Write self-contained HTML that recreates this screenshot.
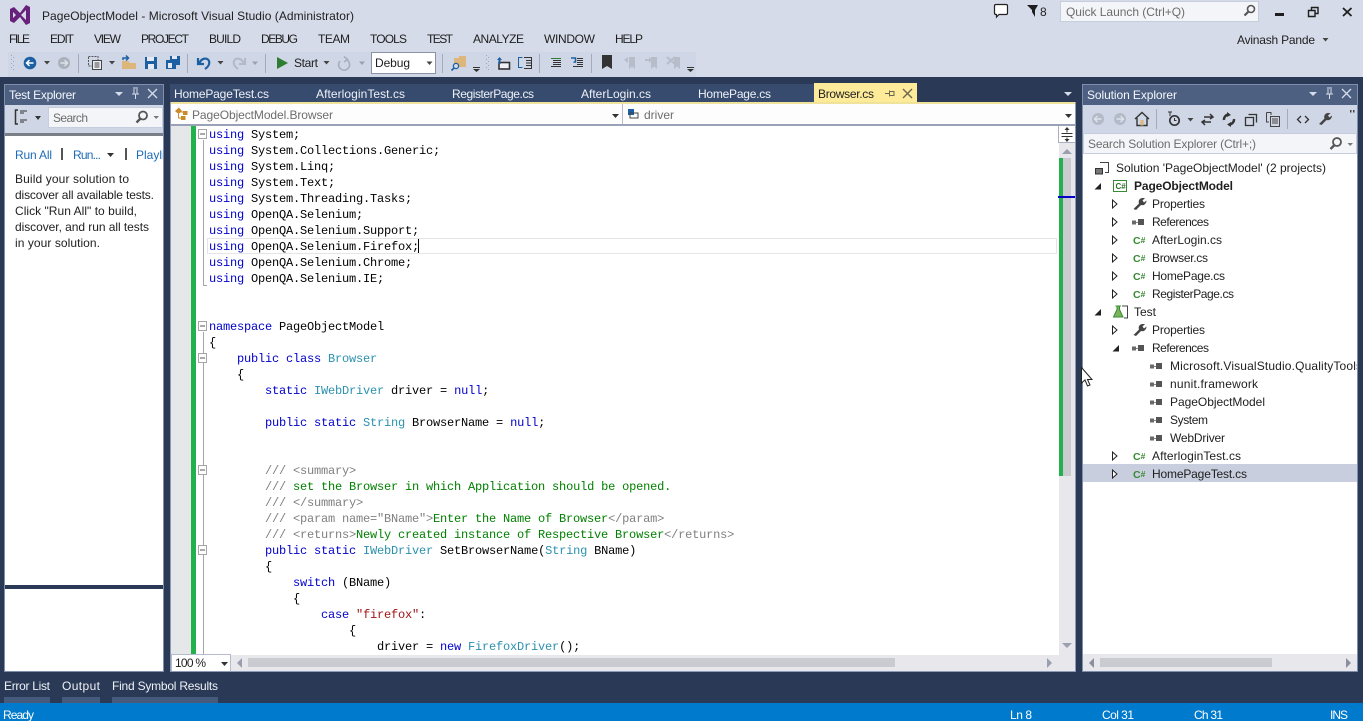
<!DOCTYPE html>
<html><head><meta charset="utf-8"><title>Visual Studio</title>
<style>
html,body{margin:0;padding:0;width:1363px;height:721px;overflow:hidden;background:#d6dbe9}
svg{display:block}
text{font-family:"Liberation Sans",sans-serif;font-size:12px;fill:#1e1e1e;white-space:pre}
.m text,text.m{font-family:"Liberation Mono",monospace;font-size:12px;letter-spacing:-.2px;fill:#000}
.k{fill:#0000cc}.t{fill:#2b91af}.s{fill:#a31515}.c{fill:#008000}.g{fill:#808080}
.tab text{fill:#eef1f7}
.cs{font-size:10.5px;font-weight:bold;fill:#388a34}
.cs tspan{font-size:8.5px}
</style></head><body>
<svg xmlns="http://www.w3.org/2000/svg" width="1363" height="721" viewBox="0 0 1363 721">
<defs>
<clipPath id="seclip"><rect x="1083" y="158" width="274" height="496"/></clipPath>
<clipPath id="teclip"><rect x="5" y="140" width="158" height="40"/></clipPath>
<g id="refi"><rect x="0" y="1.5" width="4" height="4" fill="#6a6a6a"/><rect x="4" y="3" width="2" height="1" fill="#888"/><rect x="6" y="0" width="6" height="6" fill="#555"/></g>
<path id="tri" d="M0.5 1L5 5L0.5 9Z" fill="#fff" stroke="#222" stroke-width="1"/>
<path id="open" d="M6.5 0V6.5H0Z" fill="#222"/>
<g id="wrench"><path d="M0.5 12L6 6.5C5 4 6.5 1 9.5 1L12 1L9.5 3.5L11 5.5L13.5 3.5C13.5 6.5 11 9 8 8L3 13Z" fill="#444"/></g>
<path id="dd" d="M0.5 0H6.5L3.5 3.5Z" fill="#444"/>
</defs>

<!-- frame -->
<rect width="1363" height="721" fill="#d6dbe9"/>
<rect x="0" y="77" width="1363" height="626" fill="#2a3a56"/>
<rect x="0" y="703" width="1363" height="18" fill="#007acc"/>

<!-- VS logo -->
<path d="M10 9L14 7L20 13L26 5L30 7V23L26 25L20 17L14 23L10 21ZM13 12V18L16 15ZM26 10L21 15L26 20Z" fill="#68217a" fill-rule="evenodd"/>
<text x="42" y="20" textLength="312">PageObjectModel - Microsoft Visual Studio (Administrator)</text>

<!-- menu -->
<g>
<text x="9" y="43" textLength="21">FILE</text>
<text x="50" y="43" textLength="24">EDIT</text>
<text x="94" y="43" textLength="27">VIEW</text>
<text x="141" y="43" textLength="48">PROJECT</text>
<text x="209" y="43" textLength="32">BUILD</text>
<text x="261" y="43" textLength="37">DEBUG</text>
<text x="318" y="43" textLength="32">TEAM</text>
<text x="370" y="43" textLength="37">TOOLS</text>
<text x="427" y="43" textLength="26">TEST</text>
<text x="473" y="43" textLength="51">ANALYZE</text>
<text x="544" y="43" textLength="51">WINDOW</text>
<text x="615" y="43" textLength="28">HELP</text>
</g>

<!-- top right -->
<path d="M996 4.5H1006Q1007.5 4.5 1007.5 6V13Q1007.5 14.5 1006 14.5H999L996.5 17V14.5H996Q994.5 14.5 994.5 13V6Q994.5 4.5 996 4.5Z" fill="#fff" stroke="#222" stroke-width="1.2"/>
<path d="M1027 5H1038L1035 10V17L1032 12V10Z" fill="#1e1e1e"/>
<text x="1040" y="16" textLength="7">8</text>
<rect x="1060.5" y="1.5" width="198" height="20" fill="#f4f5f9" stroke="#c6cede"/>
<text x="1066" y="16" textLength="119" style="fill:#6d6d6d">Quick Launch (Ctrl+Q)</text>
<circle cx="1251" cy="9" r="3.5" fill="none" stroke="#555" stroke-width="1.6"/><path d="M1248.5 11.5L1244.5 15.5" stroke="#555" stroke-width="2.2"/>
<rect x="1275" y="13" width="9" height="3" fill="#1e1e1e"/>
<path d="M1311.5 10V7.5H1318V13.5H1315.5M1308.5 10.5H1315V16.5H1308.5Z" fill="none" stroke="#1e1e1e" stroke-width="1.4"/>
<path d="M1343 8L1351.5 16M1351.5 8L1343 16" stroke="#1e1e1e" stroke-width="1.8"/>
<text x="1237" y="44" textLength="78">Avinash Pande</text>
<use href="#dd" x="1322" y="38"/>

<!-- toolbar -->
<rect x="8" y="52" width="688" height="25" fill="#cfd6e5"/>
<g fill="#a0a6b4"><rect x="11" y="55" width="1" height="1"/><rect x="13" y="57" width="1" height="1"/><rect x="11" y="59" width="1" height="1"/><rect x="13" y="61" width="1" height="1"/><rect x="11" y="63" width="1" height="1"/><rect x="13" y="65" width="1" height="1"/><rect x="11" y="67" width="1" height="1"/><rect x="13" y="69" width="1" height="1"/></g>
<circle cx="30" cy="63" r="6.3" fill="#1c5fa3"/><path d="M33.5 63H27M29.5 60L26.5 63L29.5 66" stroke="#fff" stroke-width="1.5" fill="none"/>
<use href="#dd" x="43.5" y="61"/>
<circle cx="64" cy="63" r="6" fill="#aab0bc"/><path d="M60.5 63H67M64.5 60L67.5 63L64.5 66" stroke="#dfe3ec" stroke-width="1.4" fill="none"/>
<rect x="78" y="54" width="1" height="19" fill="#a5abba"/>
<path d="M88.5 56.5H98V60" stroke="#555" stroke-dasharray="2 1" fill="none"/>
<path d="M88.5 57V66H92" stroke="#555" stroke-dasharray="2 1" fill="none"/>
<rect x="92.5" y="60.5" width="9" height="9" fill="#eef0f5" stroke="#444"/>
<path d="M94.5 63H99.5M94.5 65H99.5M94.5 67H99.5" stroke="#444"/>
<use href="#dd" x="108.5" y="61"/>
<path d="M122 61H128L130 63H136V69H122Z" fill="#dcb67a"/><path d="M123 60V58H128M126 55.5L128.5 58L126 60.5" stroke="#1c5fa3" stroke-width="1.5" fill="none"/>
<path d="M145 57H157V69H145Z" fill="#1c5fa3"/><rect x="147" y="57" width="7" height="4" fill="#e6e9f2"/><rect x="148" y="64" width="6" height="5" fill="#e6e9f2"/>
<path d="M170 56H180V65H176V69H166V60H170Z" fill="#1c5fa3"/><rect x="172" y="56" width="5" height="3" fill="#e6e9f2"/><rect x="168" y="63" width="4" height="5" fill="#e6e9f2"/>
<rect x="187" y="54" width="1" height="19" fill="#a5abba"/>
<path d="M198 58V64H204M199 64C201 58 207 57 209 61C210 64 208 67 205 69" fill="none" stroke="#1c5fa3" stroke-width="2.2"/>
<use href="#dd" x="217" y="61"/>
<path d="M245 58V64H239M244 64C242 58 236 57 234 61C233 64 235 67 238 69" fill="none" stroke="#b4b9c5" stroke-width="2"/>
<path d="M252 61.5H258L255 65Z" fill="#9aa0ad"/>
<rect x="265" y="54" width="1" height="19" fill="#a5abba"/>
<path d="M277 57L288 63L277 69Z" fill="#2f7d32"/>
<text x="294" y="67" textLength="24">Start</text>
<use href="#dd" x="323" y="61"/>
<path d="M340 61A5.5 5.5 0 1 0 347 60M344 56.5L347.5 59.5L344 62" fill="none" stroke="#a8aeba" stroke-width="1.6"/>
<path d="M359 61.5H365L362 65Z" fill="#9aa0ad"/>
<rect x="371.5" y="52.5" width="64" height="21" fill="#fff" stroke="#8b92a5"/>
<text x="375" y="67" textLength="35">Debug</text>
<use href="#dd" x="426" y="61.5"/>
<rect x="442" y="54" width="1" height="19" fill="#a5abba"/>
<path d="M454 58H459V56H466V67H458L454 64Z" fill="#dcb67a"/><circle cx="456" cy="66" r="2.6" fill="#d6dbe9" stroke="#1c5fa3" stroke-width="1.3"/><path d="M454 68L451.5 70.5" stroke="#1c5fa3" stroke-width="1.6"/>
<rect x="473" y="67" width="7" height="1" fill="#333"/><path d="M473 69H480L476.5 72Z" fill="#333"/>
<g fill="#a0a6b4"><rect x="486" y="55" width="1" height="1"/><rect x="488" y="57" width="1" height="1"/><rect x="486" y="59" width="1" height="1"/><rect x="488" y="61" width="1" height="1"/><rect x="486" y="63" width="1" height="1"/><rect x="488" y="65" width="1" height="1"/><rect x="486" y="67" width="1" height="1"/><rect x="488" y="69" width="1" height="1"/></g>
<rect x="499" y="62.5" width="10.5" height="6.5" fill="#eef0f5" stroke="#333" stroke-width="1.6"/><path d="M497 60L499.5 57L502 60H500.5V64H498.5V60Z" fill="#1c5fa3"/>
<path d="M522.5 57.5H518.5V67.5H522.5" stroke="#1c5fa3" fill="none"/><path d="M524 57.5H532M526 60.5H532M526 63H532M526 65.5H532M524 68.5H532M531.5 57V69" stroke="#333" fill="none"/>
<rect x="539" y="54" width="1" height="19" fill="#a5abba"/>
<path d="M551 58.5H561" stroke="#2f7d32"/><path d="M553 60.5H561M553 62.5H561M553 64.5H561M551 66.5H561" stroke="#333"/>
<path d="M571 58H575.5V62H573.5" stroke="#1c5fa3" stroke-width="1.5" fill="none"/><path d="M577 58.5H583M577 60.5H583M577 62.5H583M577 64.5H583M573 66.5H583" stroke="#333"/>
<rect x="591" y="54" width="1" height="19" fill="#a5abba"/>
<path d="M602 55H612V69L607 66L602 69Z" fill="#333"/>
<path d="M629 57H635V69L632 66.5L629 69Z" fill="#b7bdc9"/><path d="M628 57L624 60L628 63Z" fill="#b7bdc9"/>
<path d="M651 57H657V69L654 66.5L651 69Z" fill="#b7bdc9"/><path d="M645 59H649V57L652 60L649 63V61H645Z" fill="#b7bdc9"/>
<path d="M674 57H680V69L677 66.5L674 69Z" fill="#b7bdc9"/><path d="M667 57L675 64M675 57L667 64" stroke="#b7bdc9" stroke-width="2"/>
<rect x="687" y="67" width="7" height="1" fill="#333"/><path d="M687 69H694L690.5 72Z" fill="#333"/>

<!-- Test Explorer -->
<rect x="4.5" y="84.5" width="159" height="587" fill="#fff" stroke="#7f8eab"/>
<rect x="5" y="85" width="158" height="20" fill="#4d6082"/>
<text x="9" y="99" textLength="67" style="fill:#f5f7fb">Test Explorer</text>
<path d="M115 92H123L119 96Z" fill="#d5dcea"/>
<path d="M133 88H138M134 89V94H137V89M132 94H139M135.5 94V99" stroke="#d5dcea" fill="none"/>
<path d="M148 89L157 98M157 89L148 98" stroke="#d5dcea" stroke-width="1.3"/>
<rect x="5" y="105" width="158" height="26" fill="#cfd6e5"/>
<rect x="5" y="133" width="158" height="3" fill="#7b7f87"/>
<rect x="5" y="131" width="158" height="2" fill="#cfd6e5"/>
<path d="M15.5 109.5V124.5M15 110H18M15 124H18" stroke="#333" stroke-width="1.5" fill="none"/><path d="M20 111H27M20 113H24M20 120H27M20 122H24" stroke="#333"/>
<path d="M35 116H41L38 120Z" fill="#333"/>
<rect x="48.5" y="107.5" width="114" height="20" fill="#f4f5f9" stroke="#c6cede"/>
<text x="53" y="122" textLength="35" style="fill:#6d6d6d">Search</text>
<circle cx="143" cy="115.5" r="4" fill="none" stroke="#555" stroke-width="1.8"/><path d="M140.5 118.5L136.5 122.5" stroke="#555" stroke-width="2.4"/>
<path d="M153.5 116H159L156.2 119Z" fill="#777"/>
<text x="15" y="159" textLength="37" style="fill:#1e6bb8">Run All</text>
<rect x="61" y="148" width="2" height="12" fill="#555"/>
<text x="73" y="159" textLength="28" style="fill:#1e6bb8">Run...</text>
<path d="M107 153H114L110.5 157Z" fill="#333"/>
<rect x="125" y="148" width="2" height="12" fill="#555"/>
<g clip-path="url(#teclip)"><text x="136" y="159" textLength="38" style="fill:#1e6bb8">Playlist</text></g>
<text x="15" y="183" textLength="114">Build your solution to</text>
<text x="15" y="199" textLength="139">discover all available tests.</text>
<text x="15" y="215" textLength="122">Click "Run All" to build,</text>
<text x="15" y="231" textLength="134">discover, and run all tests</text>
<text x="15" y="247" textLength="85">in your solution.</text>
<rect x="5" y="585" width="158" height="4" fill="#2a3a56"/>

<!-- Editor -->
<rect x="170" y="84" width="645" height="18" fill="#364b6e"/>
<g class="tab">
<text x="174" y="98" textLength="95">HomePageTest.cs</text>
<text x="316" y="98" textLength="89">AfterloginTest.cs</text>
<text x="452" y="98" textLength="82">RegisterPage.cs</text>
<text x="581" y="98" textLength="70">AfterLogin.cs</text>
<text x="698" y="98" textLength="73">HomePage.cs</text>
</g>
<rect x="814" y="83" width="103" height="19" fill="#fdeb9a"/>
<text x="818" y="98" textLength="56">Browser.cs</text>
<path d="M885 93.5H889M889.5 90.5V96.5M890 91.5H894V95.5H890" stroke="#6b6650" fill="none"/>
<path d="M903 89L912 98M912 89L903 98" stroke="#6b6650" stroke-width="1.4"/>
<path d="M1064 92H1072L1068 96Z" fill="#d5dcea"/>
<rect x="170" y="102" width="906" height="570" fill="#fff"/>
<rect x="170" y="102" width="906" height="2" fill="#efe29a"/>
<rect x="171" y="104" width="904" height="20" fill="#fdfdfe"/>
<rect x="170" y="124" width="906" height="2" fill="#9aa2b8"/>
<rect x="622" y="104" width="1" height="20" fill="#b6bccb"/>
<path d="M175 111L179 107.5L182 111L178.5 114Z" fill="#c98a2b"/><rect x="183" y="111" width="4.5" height="4" fill="#c98a2b"/><rect x="181" y="116" width="4.5" height="4" fill="#c98a2b"/><path d="M178.5 114V118H181M180 112H183" stroke="#c98a2b" fill="none"/>
<text x="192" y="119" textLength="141" style="fill:#6d6d6d">PageObjectModel.Browser</text>
<path d="M612 114H619L615.5 118Z" fill="#333"/>
<rect x="628" y="109" width="6" height="6" fill="#1c5fa3"/><rect x="630" y="113" width="8" height="5" fill="none" stroke="#444"/>
<text x="644" y="119" textLength="30" style="fill:#6d6d6d">driver</text>
<path d="M1065 114H1072L1068.5 118Z" fill="#333"/>

<rect x="171" y="126" width="20" height="529" fill="#e6e7e8"/>
<rect x="191" y="126" width="5" height="529" fill="#22b14c"/>
<rect x="207.5" y="238.5" width="849" height="15" fill="none" stroke="#e5e5e5"/>
<rect x="418" y="239" width="1" height="14" fill="#000"/>
<path d="M203.5 140V285.5H207M203.5 332V655" stroke="#a5a5a5" fill="none"/>
<g fill="#fff" stroke="#a5a5a5">
<rect x="198.5" y="129.5" width="8" height="9"/><rect x="198.5" y="321.5" width="8" height="9"/><rect x="198.5" y="353.5" width="8" height="9"/><rect x="198.5" y="465.5" width="8" height="9"/><rect x="198.5" y="545.5" width="8" height="9"/>
</g>
<path d="M200 134H205M200 326H205M200 358H205M200 470H205M200 550H205" stroke="#555"/>

<g class="m">
<text x="209" y="138"><tspan class="k">using</tspan> System;</text>
<text x="209" y="154"><tspan class="k">using</tspan> System.Collections.Generic;</text>
<text x="209" y="170"><tspan class="k">using</tspan> System.Linq;</text>
<text x="209" y="186"><tspan class="k">using</tspan> System.Text;</text>
<text x="209" y="202"><tspan class="k">using</tspan> System.Threading.Tasks;</text>
<text x="209" y="218"><tspan class="k">using</tspan> OpenQA.Selenium;</text>
<text x="209" y="234"><tspan class="k">using</tspan> OpenQA.Selenium.Support;</text>
<text x="209" y="250"><tspan class="k">using</tspan> OpenQA.Selenium.Firefox;</text>
<text x="209" y="266"><tspan class="k">using</tspan> OpenQA.Selenium.Chrome;</text>
<text x="209" y="282"><tspan class="k">using</tspan> OpenQA.Selenium.IE;</text>
<text x="209" y="330"><tspan class="k">namespace</tspan> PageObjectModel</text>
<text x="209" y="346">{</text>
<text x="237" y="362"><tspan class="k">public class</tspan> <tspan class="t">Browser</tspan></text>
<text x="237" y="378">{</text>
<text x="265" y="394"><tspan class="k">static</tspan> <tspan class="t">IWebDriver</tspan> driver = <tspan class="k">null</tspan>;</text>
<text x="265" y="426"><tspan class="k">public static</tspan> <tspan class="t">String</tspan> BrowserName = <tspan class="k">null</tspan>;</text>
<text x="265" y="474"><tspan class="g">/// &lt;summary&gt;</tspan></text>
<text x="265" y="490"><tspan class="g">///</tspan><tspan class="c"> set the Browser in which Application should be opened.</tspan></text>
<text x="265" y="506"><tspan class="g">/// &lt;/summary&gt;</tspan></text>
<text x="265" y="522"><tspan class="g">/// &lt;param name="BName"&gt;</tspan><tspan class="c">Enter the Name of Browser</tspan><tspan class="g">&lt;/param&gt;</tspan></text>
<text x="265" y="538"><tspan class="g">/// &lt;returns&gt;</tspan><tspan class="c">Newly created instance of Respective Browser</tspan><tspan class="g">&lt;/returns&gt;</tspan></text>
<text x="265" y="554"><tspan class="k">public static</tspan> <tspan class="t">IWebDriver</tspan> SetBrowserName(<tspan class="t">String</tspan> BName)</text>
<text x="265" y="570">{</text>
<text x="293" y="586"><tspan class="k">switch</tspan> (BName)</text>
<text x="293" y="602">{</text>
<text x="321" y="618"><tspan class="k">case</tspan> <tspan class="s">"firefox"</tspan>:</text>
<text x="349" y="634">{</text>
<text x="377" y="650">driver = <tspan class="k">new</tspan> <tspan class="t">FirefoxDriver</tspan>();</text>
</g>

<!-- editor right scroll -->
<rect x="1059" y="126" width="17" height="529" fill="#e8e8ec"/>
<rect x="1059" y="126" width="16" height="17" fill="#fff"/>
<path d="M1058.5 126V142.5H1075" stroke="#aab0c0" fill="none"/>
<path d="M1061.5 133.5H1072.5M1061.5 136.5H1072.5M1067 129V132.5M1067 137.5V140" stroke="#333"/>
<path d="M1064.5 130H1069.5L1067 127ZM1064.5 139H1069.5L1067 142Z" fill="#333"/>
<path d="M1062 154H1072L1067 149Z" fill="#9a9fb0"/>
<path d="M1062 643H1072L1067 648Z" fill="#9a9fb0"/>
<rect x="1063" y="158" width="8" height="318" fill="#c9cbd1"/>
<rect x="1059" y="158" width="4" height="318" fill="#22b14c"/>
<rect x="1058" y="196" width="17" height="2" fill="#0000c8"/>

<!-- editor bottom -->
<rect x="171" y="655" width="905" height="17" fill="#e8e8ec"/>
<rect x="171.5" y="654.5" width="59" height="17" fill="#fff" stroke="#b6bccb"/>
<text x="175" y="667" textLength="31">100 %</text>
<path d="M221 662H228L224.5 666Z" fill="#333"/>
<path d="M242 658V668L237 663Z" fill="#9a9fb0"/>
<rect x="248" y="658" width="647" height="9" fill="#c9cbd1"/>
<path d="M1047 658V668L1052 663Z" fill="#9a9fb0"/>
<path d="M170 671.5H1076" stroke="#8e9bb8"/>
<path d="M170.5 102V672M1075.5 102V672" stroke="#8e9bb8"/>

<!-- Solution Explorer -->
<rect x="1082.5" y="84.5" width="275" height="587" fill="#fff" stroke="#7f8eab"/>
<rect x="1083" y="85" width="274" height="20" fill="#4d6082"/>
<text x="1087" y="99" textLength="90" style="fill:#f5f7fb">Solution Explorer</text>
<path d="M1309 92H1317L1313 96Z" fill="#d5dcea"/>
<path d="M1327 88H1332M1328 89V94H1331V89M1326 94H1333M1329.5 94V99" stroke="#d5dcea" fill="none"/>
<path d="M1342 89L1351 98M1351 89L1342 98" stroke="#d5dcea" stroke-width="1.3"/>
<rect x="1083" y="105" width="274" height="49" fill="#cfd6e5"/>
<circle cx="1098" cy="119" r="6" fill="#b4bac7"/><path d="M1101.5 119H1095M1097.5 116L1094.5 119L1097.5 122" stroke="#dfe3ec" stroke-width="1.4" fill="none"/>
<circle cx="1120" cy="119" r="6" fill="#b4bac7"/><path d="M1116.5 119H1123M1120.5 116L1123.5 119L1120.5 122" stroke="#dfe3ec" stroke-width="1.4" fill="none"/>
<path d="M1135 119L1142 112.5L1149 119M1137 118V125.5H1147V118" fill="none" stroke="#333" stroke-width="1.4"/><rect x="1140.5" y="120" width="3" height="5.5" fill="#dcb67a"/>
<rect x="1156" y="109" width="1" height="20" fill="#a5abba"/>
<circle cx="1174.5" cy="120.5" r="4.7" fill="none" stroke="#333" stroke-width="1.7"/><path d="M1168 112L1172 112M1170 112V116M1174.5 118V120.5H1176.5" stroke="#333" fill="none"/>
<use href="#dd" x="1187" y="118"/>
<path d="M1204 117H1213M1210 114L1213 117L1210 119M1211 122H1202M1205 125L1202 122L1205 120" stroke="#333" stroke-width="1.5" fill="none"/>
<path d="M1224 120A5 5 0 0 1 1229 114.5M1234 119A5 5 0 0 1 1229 124.5" stroke="#333" stroke-width="2.4" fill="none"/><path d="M1227 112L1231 115L1227 117ZM1231 122L1227 124.5L1231 127Z" fill="#333"/>
<path d="M1245.5 117.5H1253.5V125.5H1245.5ZM1248.5 114.5H1256.5V122.5" fill="none" stroke="#333" stroke-width="1.3"/>
<path d="M1266.5 112.5H1271V115M1266.5 112.5V122H1269M1270.5 116.5H1279.5V126.5H1270.5ZM1272 119H1278M1272 121H1278M1272 123H1278" fill="none" stroke="#444"/>
<rect x="1287" y="109" width="1" height="20" fill="#a5abba"/>
<path d="M1301 116L1297.5 119.5L1301 123M1305 116L1308.5 119.5L1305 123" stroke="#333" stroke-width="1.3" fill="none"/>
<use href="#wrench" x="1318.5" y="112"/>
<rect x="1350" y="110" width="1.5" height="2.5" fill="#444"/><rect x="1353" y="110" width="1.5" height="2.5" fill="#444"/>
<rect x="1083.5" y="133.5" width="273" height="20" fill="#f4f5f9" stroke="#c6cede"/>
<text x="1088" y="148" textLength="168" style="fill:#6d6d6d">Search Solution Explorer (Ctrl+;)</text>
<circle cx="1337" cy="142" r="4" fill="none" stroke="#555" stroke-width="1.8"/><path d="M1334.5 145L1330.5 149" stroke="#555" stroke-width="2.4"/>
<path d="M1347.5 143H1353L1350.2 146Z" fill="#777"/>

<rect x="1083" y="464" width="274" height="18" fill="#c9cede"/>
<g clip-path="url(#seclip)">
<path d="M1100 162.5H1108.5V172.5H1105" fill="none" stroke="#444"/><rect x="1095.5" y="168.5" width="7" height="5.5" fill="#777" stroke="#333"/>
<text x="1116" y="172" textLength="210">Solution 'PageObjectModel' (2 projects)</text>
<use href="#open" x="1094.5" y="183"/>
<rect x="1113.5" y="180.5" width="13" height="11" fill="#fff" stroke="#388a34"/>
<text x="1115.5" y="189" style="font-size:8px;font-weight:bold;fill:#2f6f2c">C#</text>
<text x="1134" y="190" textLength="99" style="font-weight:bold">PageObjectModel</text>

<use href="#tri" x="1112" y="199"/><use href="#wrench" x="1133" y="197"/>
<text x="1152" y="208" textLength="53">Properties</text>
<use href="#tri" x="1112" y="217"/><use href="#refi" x="1132" y="219"/>
<text x="1152" y="226" textLength="57">References</text>
<use href="#tri" x="1112" y="235"/><text class="cs" x="1133" y="244">C<tspan dy="-1">#</tspan></text>
<text x="1152" y="244" textLength="70">AfterLogin.cs</text>
<use href="#tri" x="1112" y="253"/><text class="cs" x="1133" y="262">C<tspan dy="-1">#</tspan></text>
<text x="1152" y="262" textLength="56">Browser.cs</text>
<use href="#tri" x="1112" y="271"/><text class="cs" x="1133" y="280">C<tspan dy="-1">#</tspan></text>
<text x="1152" y="280" textLength="73">HomePage.cs</text>
<use href="#tri" x="1112" y="289"/><text class="cs" x="1133" y="298">C<tspan dy="-1">#</tspan></text>
<text x="1152" y="298" textLength="82">RegisterPage.cs</text>

<use href="#open" x="1094.5" y="309"/>
<path d="M1115.5 306H1121M1117 306V309.5L1113.5 317H1123L1119.5 309.5V306" fill="#7ab55c" stroke="#388a34"/>
<path d="M1122 306H1127.5V318H1124" fill="none" stroke="#444"/>
<text x="1134" y="316" textLength="22">Test</text>
<use href="#tri" x="1112" y="325"/><use href="#wrench" x="1133" y="323"/>
<text x="1152" y="334" textLength="53">Properties</text>
<use href="#open" x="1112.5" y="345"/><use href="#refi" x="1132" y="345"/>
<text x="1152" y="352" textLength="57">References</text>
<use href="#refi" x="1150" y="363"/><text x="1170" y="370" textLength="192">Microsoft.VisualStudio.QualityTools</text>
<use href="#refi" x="1150" y="381"/><text x="1170" y="388" textLength="88">nunit.framework</text>
<use href="#refi" x="1150" y="399"/><text x="1170" y="406" textLength="95">PageObjectModel</text>
<use href="#refi" x="1150" y="417"/><text x="1170" y="424" textLength="38">System</text>
<use href="#refi" x="1150" y="435"/><text x="1170" y="442" textLength="55">WebDriver</text>
<use href="#tri" x="1112" y="451"/><text class="cs" x="1133" y="460">C<tspan dy="-1">#</tspan></text>
<text x="1152" y="460" textLength="89">AfterloginTest.cs</text>
<use href="#tri" x="1112" y="469"/><text class="cs" x="1133" y="478">C<tspan dy="-1">#</tspan></text>
<text x="1152" y="478" textLength="95">HomePageTest.cs</text>
</g>
<rect x="1083" y="654" width="274" height="17" fill="#e8e8ec"/>
<path d="M1094 658V668L1089 663Z" fill="#8a8f9f"/>
<rect x="1100" y="658" width="172" height="9" fill="#c9cbd1"/>
<path d="M1346 658V668L1351 663Z" fill="#8a8f9f"/>

<!-- cursor -->
<path d="M1081.5 367.5V383L1085 380L1087.5 386L1090 385L1087.5 379.5H1092Z" fill="#fff" stroke="#222" stroke-width="1"/>

<!-- bottom tabs -->
<text x="4" y="690" textLength="46" style="fill:#eef1f7">Error List</text>
<text x="62" y="690" textLength="38" style="fill:#eef1f7">Output</text>
<text x="112" y="690" textLength="106" style="fill:#eef1f7">Find Symbol Results</text>
<rect x="4" y="697" width="46" height="6" fill="#465a7c"/>
<rect x="62" y="697" width="38" height="6" fill="#465a7c"/>
<rect x="112" y="697" width="106" height="6" fill="#465a7c"/>

<!-- status -->
<g>
<text x="3" y="719" textLength="31" style="fill:#fff">Ready</text>
<text x="1010" y="719" textLength="22" style="fill:#fff">Ln 8</text>
<text x="1102" y="719" textLength="32" style="fill:#fff">Col 31</text>
<text x="1194" y="719" textLength="29" style="fill:#fff">Ch 31</text>
<text x="1330" y="719" textLength="18" style="fill:#fff">INS</text>
</g>
</svg>
</body></html>
